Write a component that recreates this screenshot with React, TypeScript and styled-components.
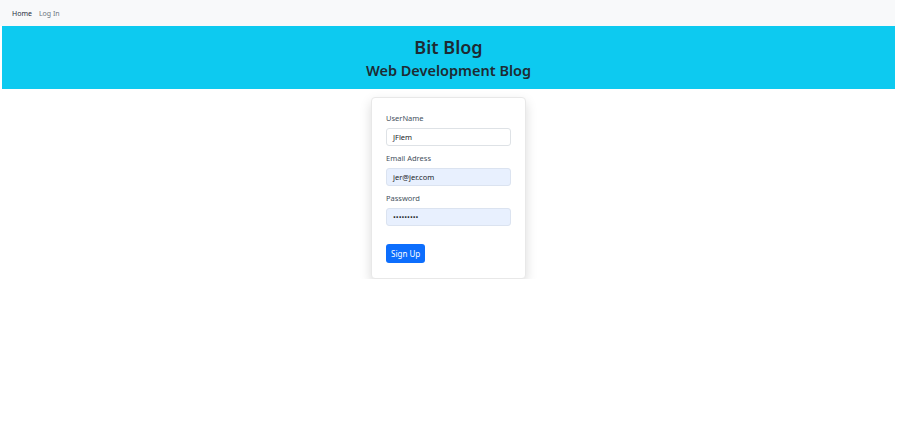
import React, { FC } from 'react';
import styled, { createGlobalStyle } from 'styled-components';

const GlobalStyle = createGlobalStyle`
  html, body {
    margin: 0;
    padding: 0;
    background: #ffffff;
    font-family: "Noto Sans", "Open Sans", "Liberation Sans", sans-serif;
    color: #212529;
  }
`;

const Page = styled.div`
  width: 895px;
  display: flex;
  flex-direction: column;
`;

const NavBar = styled.nav`
  height: 26px;
  background: #f8f9fa;
  display: flex;
  align-items: center;
  gap: 7px;
  padding-left: 12px;
`;

const NavLink = styled.a<{ $active?: boolean }>`
  font-size: 7px;
  text-decoration: none;
  color: ${(p) => (p.$active ? '#1f2d3d' : '#6c757d')};
`;

const Header = styled.header`
  margin-left: 2px;
  height: 63px;
  background: #0dcaf0;
  display: flex;
  flex-direction: column;
  align-items: center;
  justify-content: center;
  gap: 1px;
`;

const Title = styled.h1`
  margin: 0;
  font-size: 18px;
  font-weight: 600;
  line-height: 24px;
  color: #1e2a33;
`;

const Subtitle = styled.h2`
  margin: 0;
  font-size: 14.5px;
  font-weight: 600;
  line-height: 20px;
  color: #1e2a33;
`;

const Main = styled.main`
  display: flex;
  justify-content: center;
  padding-top: 8px;
  padding-left: 2px;
`;

const Card = styled.form`
  width: 155px;
  box-sizing: border-box;
  padding: 15px 14px 15px 14px;
  border: 1px solid #e8e8e8;
  border-radius: 4px;
  background: #fff;
  box-shadow: 0 5px 12px rgba(0, 0, 0, 0.15);
  display: flex;
  flex-direction: column;
`;

const Field = styled.div`
  display: flex;
  flex-direction: column;
  gap: 4px;
  margin-bottom: 7px;
`;

const Label = styled.label`
  font-size: 7.5px;
  line-height: 11px;
  color: #44505c;
`;

const Input = styled.div<{ $filled?: boolean }>`
  height: 18px;
  box-sizing: border-box;
  border: 1px solid ${(p) => (p.$filled ? '#dbe3f0' : '#dee2e6')};
  border-radius: 3px;
  background: ${(p) => (p.$filled ? '#e8f0fe' : '#fff')};
  padding: 0 6px;
  display: flex;
  align-items: center;
  font-size: 7.5px;
  color: #212529;
`;

const Button = styled.button`
  margin-top: 11px;
  align-self: flex-start;
  height: 19px;
  padding: 0 5px;
  border: none;
  border-radius: 3px;
  background: #0d6efd;
  color: #fff;
  font-family: inherit;
  font-size: 8px;
`;

const App: FC = () => {
  return (
    <>
      <GlobalStyle />
      <Page>
        <NavBar>
          <NavLink $active>Home</NavLink>
          <NavLink>Log In</NavLink>
        </NavBar>
        <Header>
          <Title>Bit Blog</Title>
          <Subtitle>Web Development Blog</Subtitle>
        </Header>
        <Main>
          <Card>
            <Field>
              <Label>UserName</Label>
              <Input>JFlem</Input>
            </Field>
            <Field>
              <Label>Email Adress</Label>
              <Input $filled>jer@jer.com</Input>
            </Field>
            <Field>
              <Label>Password</Label>
              <Input $filled>•••••••••</Input>
            </Field>
            <Button type="button">Sign Up</Button>
          </Card>
        </Main>
      </Page>
    </>
  );
};

export default App;
